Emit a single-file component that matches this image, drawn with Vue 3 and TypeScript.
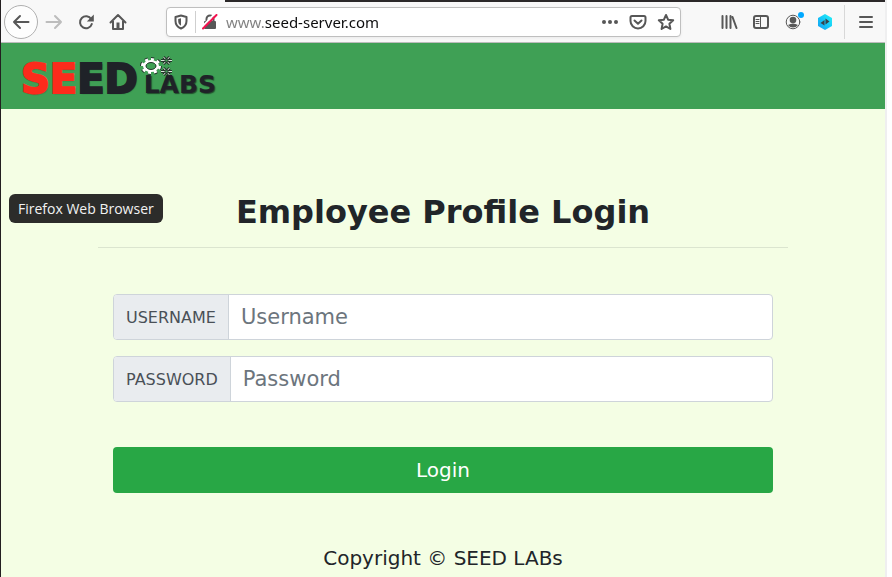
<script setup lang="ts">
import { ref } from 'vue'

const address = ref('www.seed-server.com')
const username = ref('')
const password = ref('')
</script>

<template>
  <div class="window">
    <div class="tab-strip"></div>
    <header class="toolbar">
      <button class="tool back" type="button" aria-label="Back">
        <svg width="18" height="18" viewBox="0 0 18 18"><path d="M16.5 9H2M8 3 2 9l6 6" /></svg>
      </button>
      <button class="tool forward" type="button" aria-label="Forward" disabled>
        <svg width="18" height="18" viewBox="0 0 18 18"><path d="M1.5 9H16M10 3l6 6-6 6" /></svg>
      </button>
      <button class="tool" type="button" aria-label="Reload">
        <svg width="18" height="18" viewBox="0 0 18 18"><path d="M14.2 6.2A6 6 0 1 0 14.8 11" /><path class="solid" d="M16.8 1.5v7H9.8z" /></svg>
      </button>
      <button class="tool" type="button" aria-label="Home">
        <svg width="18" height="18" viewBox="0 0 18 18"><path d="M1.5 9.5 9 2l7.5 7.5M4 8v8h10V8" /><path class="solid" d="M7.5 9.5h3V15h-3z" /></svg>
      </button>

      <div class="url-bar">
        <button class="tool shield" type="button" aria-label="Tracking protection">
          <svg width="14" height="16" viewBox="0 0 14 16"><path d="M7 1.5 12.5 3v4c0 3.5-2 6-5.5 7.5C3.5 13 1.5 10.5 1.5 7V3z" /><path class="solid" d="M7 4.2v7.5C5 10.5 4.2 9 4.2 7V5z" /></svg>
        </button>
        <button class="tool lock" type="button" aria-label="Connection is not secure">
          <svg width="16" height="16" viewBox="0 0 16 16"><path d="M4.5 8V5a3.5 3.5 0 0 1 7 0v3" /><rect class="solid" x="2" y="7" width="12" height="8" rx="1" /><path class="gap" d="m0 13 12.500-13" /><path class="slash" d="M1 14.5 14.5 1" /></svg>
        </button>
        <input v-model="address" class="address" type="text" aria-label="Address" spellcheck="false" />
        <button class="tool narrow" type="button" aria-label="Page actions">
          <svg width="18" height="18" viewBox="0 0 18 18"><circle class="solid" cx="3" cy="9" r="2" /><circle class="solid" cx="9" cy="9" r="2" /><circle class="solid" cx="15" cy="9" r="2" /></svg>
        </button>
        <button class="tool narrow" type="button" aria-label="Save to Pocket">
          <svg width="18" height="18" viewBox="0 0 18 18"><path d="M3 3h12q1.5 0 1.5 1.5V8a7.5 7.5 0 0 1-15 0V4.5Q1.5 3 3 3z" /><path d="m5.5 7.5 3.5 3.3 3.5-3.3" /></svg>
        </button>
        <button class="tool narrow" type="button" aria-label="Bookmark this page">
          <svg width="18" height="18" viewBox="0 0 18 18"><path d="m9 2 2.100 4.700 5.100.6-3.800 3.500 1 5.200L9 13.400 4.600 16l1-5.200L1.800 7.300l5.100-.6z" /></svg>
        </button>
      </div>

      <button class="tool" type="button" aria-label="Library">
        <svg width="18" height="18" viewBox="0 0 18 18"><path d="M2.500 3v12M6.500 3v12M10.500 3v12M12.500 4l4 11" /></svg>
      </button>
      <button class="tool" type="button" aria-label="Sidebars">
        <svg width="18" height="18" viewBox="0 0 18 18"><rect x="2" y="3" width="14" height="12" rx="2" /><path class="thin" d="M8.500 3v12M4 6.500h3M4 8.500h3M4 10.500h3" /></svg>
      </button>
      <button class="tool account" type="button" aria-label="Account">
        <svg width="18" height="18" viewBox="0 0 18 18"><circle class="thin" cx="9" cy="9" r="6.800" /><circle class="solid" cx="9" cy="7" r="3.300" /><path class="solid" d="M4 12q5-3 10 0-2 2.500-5 2.500T4 12z" /></svg>
        <span class="dot"></span>
      </button>
      <button class="tool" type="button" aria-label="Extension">
        <svg width="18" height="18" viewBox="0 0 18 18">
          <defs><linearGradient id="hex" x1="0" y1="1" x2="1" y2="0"><stop offset="0" stop-color="#149df2" /><stop offset=".5" stop-color="#16c8f8" /><stop offset="1" stop-color="#25f5f5" /></linearGradient></defs>
          <path class="hexagon" d="m9 1 7 4v8l-7 4-7-4V5z" /><path class="arrows" d="m4.500 10 4-3v5.500zM9.500 5.500l4 3-4 3z" />
        </svg>
      </button>
      <span class="divider"></span>
      <button class="tool" type="button" aria-label="Open menu">
        <svg width="18" height="18" viewBox="0 0 18 18"><path d="M3 4h12M3 9h12M3 14h12" /></svg>
      </button>
    </header>

    <nav class="site-bar">
      <a class="logo" href="#">
        <span class="seed"><span class="red">SE</span>ED</span>
        <span class="labs">LABS</span>
        <svg class="gears" width="36" height="22" viewBox="0 0 36 22" aria-hidden="true">
          <ellipse class="teeth edge" cx="11" cy="11" rx="8" ry="6" pathLength="32" />
          <ellipse class="teeth" cx="11" cy="11" rx="8" ry="6" pathLength="32" />
          <ellipse class="ring" cx="11" cy="11" rx="6.500" ry="4.500" />
          <ellipse class="hole" cx="11" cy="11" rx="5" ry="3.500" />
          <g class="small">
            <path d="M21 5.500h11M23.500 2l6 7M23.500 9l6-7M21 16.500h11M23.500 13l6 7M23.500 20l6-7" />
            <path class="light" d="M21 5.500h11M23.500 2l6 7M23.500 9l6-7M21 16.500h11M23.500 13l6 7M23.500 20l6-7" />
            <circle cx="26.500" cy="5.500" r="1.500" /><circle cx="26.500" cy="16.500" r="1.500" />
          </g>
        </svg>
      </a>
    </nav>

    <main class="content">
      <h1>Employee Profile Login</h1>
      <hr />
      <form @submit.prevent>
        <div class="field">
          <label for="username">USERNAME</label>
          <input id="username" v-model="username" type="text" placeholder="Username" />
        </div>
        <div class="field">
          <label for="password">PASSWORD</label>
          <input id="password" v-model="password" type="password" placeholder="Password" />
        </div>
        <button class="login" type="submit">Login</button>
      </form>
      <footer>Copyright © SEED LABs</footer>
    </main>

    <div class="tooltip" role="tooltip">Firefox Web Browser</div>
  </div>
</template>

<style>
body {
  margin: 0;
  background: #fff;
}
</style>

<style scoped>
* {
  box-sizing: border-box;
}
.window {
  position: relative;
  display: flex;
  flex-direction: column;
  min-height: 100vh;
  margin-right: 5px;
  border-left: 1px solid #231f20;
  border-right: 2px solid #efeff0;
  background: #f4fee4;
  color: #212529;
  font-family: "DejaVu Sans", sans-serif;
}
.tab-strip {
  height: 2px;
  margin-left: 224px;
  background: #2b2829;
  box-shadow: -224px 0 #f8f8f8;
}
.toolbar {
  display: flex;
  align-items: center;
  height: 41px;
  padding: 0 3px;
  border-bottom: 1px solid #bcbcbc;
  background: #f8f8f8;
}
.tool {
  position: relative;
  display: flex;
  flex: none;
  align-items: center;
  justify-content: center;
  width: 32px;
  height: 28px;
  padding: 0;
  border: 0;
  background: none;
}
.tool.back {
  width: 34px;
  height: 34px;
  border: 1px solid #b0b0b0;
  border-radius: 50%;
  background: #fdfdfd;
}
.tool svg {
  fill: none;
  stroke: #575757;
  stroke-width: 2;
  stroke-linecap: round;
  stroke-linejoin: round;
}
.tool.forward svg {
  stroke: #bdbdbd;
}
.tool svg .solid {
  fill: #575757;
  stroke: none;
}
.tool svg .thin {
  stroke-width: 1;
}
.tool svg .gap {
  stroke: #fff;
}
.tool svg .slash {
  stroke: #f5114f;
}
.tool svg .hexagon {
  fill: url(#hex);
  stroke: none;
}
.tool svg .arrows {
  fill: #38434a;
  stroke: none;
}
.dot {
  position: absolute;
  top: 4px;
  right: 5px;
  width: 6px;
  height: 6px;
  border-radius: 50%;
  background: #00a8ff;
}
.divider {
  width: 1px;
  height: 34px;
  margin: 0 5px 0 3px;
  background: #d8d8d8;
}
.url-bar {
  display: flex;
  flex: 1;
  align-items: center;
  min-width: 0;
  height: 30px;
  margin: 0 32px;
  border: 1px solid #bfbfbf;
  border-radius: 4px;
  background: #fff;
  box-shadow: 0 1px 3px rgba(0, 0, 0, 0.06);
}
.shield {
  width: 29px;
  height: 22px;
  border-right: 1px solid #cfcfcf;
}
.lock,
.narrow {
  width: 28px;
}
.address {
  flex: 1;
  min-width: 0;
  height: 28px;
  padding: 0 0 0 2px;
  border: 0;
  outline: 0;
  background: linear-gradient(90deg, #808080 41px, #0c0c0d 41px);
  background-clip: text;
  color: transparent;
  font: 15px "Noto Sans", sans-serif;
}
.site-bar {
  display: flex;
  align-items: center;
  height: 66px;
  padding: 0 20px;
  background: #3fa055;
}
.logo {
  position: relative;
  display: flex;
  align-items: baseline;
  gap: 6px;
  padding-top: 12px;
  color: #1f2228;
  font-weight: bold;
  line-height: 40px;
  text-decoration: none;
  text-shadow: 1px 1px 1px rgba(20, 40, 25, 0.7);
}
.seed {
  font-size: 40px;
  -webkit-text-stroke: 2px currentColor;
}
.red {
  color: #fc2b1c;
}
.labs {
  font-size: 25px;
}
.gears {
  position: absolute;
  top: 8px;
  right: 40px;
  fill: none;
}
.teeth {
  stroke: #fff;
  stroke-width: 4;
  stroke-dasharray: 2 2;
}
.edge {
  stroke: #22352a;
  stroke-width: 6;
}
.ring {
  stroke: #fff;
  stroke-width: 3;
}
.hole {
  fill: #3fa055;
  stroke: #22352a;
}
.small {
  stroke: #25352b;
  stroke-width: 3;
}
.small .light {
  stroke: #d9e8dc;
  stroke-width: 1;
}
.small circle {
  fill: #3fa055;
  stroke-width: 1;
}
.content {
  width: 100%;
  max-width: 690px;
  margin: 0 auto;
  padding-top: 84px;
}
h1 {
  margin: 0;
  font-size: 32px;
  line-height: 38px;
  text-align: center;
}
hr {
  height: 1px;
  margin: 16px 0 46px;
  border: 0;
  background: #dbe5cf;
}
form {
  display: flex;
  flex-direction: column;
  gap: 16px;
  padding: 0 15px;
}
.field {
  display: flex;
  height: 46px;
  border: 1px solid #ced4da;
  border-radius: 4px;
  background: #fff;
  overflow: hidden;
}
.field label {
  display: flex;
  align-items: center;
  padding: 0 12px;
  border-right: 1px solid #ced4da;
  background: #e9ecef;
  color: #495057;
  font-size: 16px;
}
.field input {
  flex: 1;
  min-width: 0;
  padding: 0 12px;
  border: 0;
  outline: 0;
  background: none;
  color: #495057;
  font: 21px "DejaVu Sans", sans-serif;
}
.field input::placeholder {
  color: #6c757d;
  opacity: 1;
}
.login {
  height: 46px;
  margin-top: 29px;
  border: 0;
  border-radius: 4px;
  background: #28a745;
  color: #fff;
  font: 20px "DejaVu Sans", sans-serif;
}
footer {
  padding-top: 53px;
  font-size: 20px;
  line-height: 24px;
  text-align: center;
}
.tooltip {
  position: absolute;
  top: 194px;
  left: 8px;
  padding: 0 9px;
  border-radius: 6px;
  background: #2c2c2a;
  color: #f2f2f2;
  font: 14px/29px "Open Sans", "Noto Sans", sans-serif;
  white-space: nowrap;
}
</style>
